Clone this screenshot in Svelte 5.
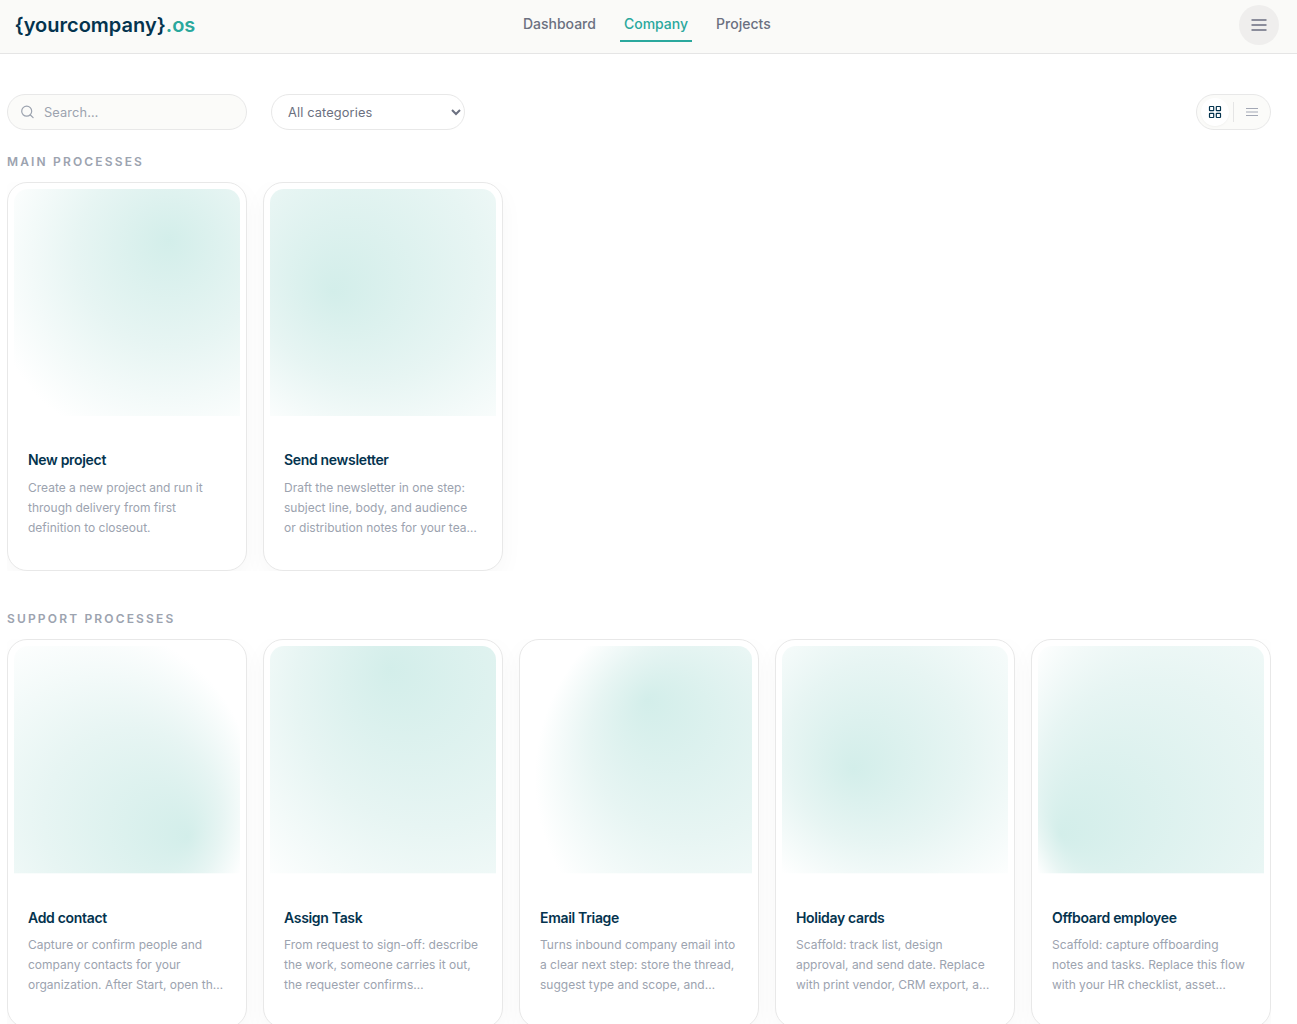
<script>
  const nav = ['Dashboard', 'Company', 'Projects'];
  const sections = [
    {
      title: 'Main processes',
      cards: [
        { title: 'New project', lines: ['Create a new project and run it', 'through delivery from first', 'definition to closeout.'], g: [0.69, 0.34, 0.82, 0.685, 0.225] },
        { title: 'Send newsletter', lines: ['Draft the newsletter in one step:', 'subject line, body, and audience', 'or distribution notes for your tea…'], g: [0.57, 0.25, 1.0, 0.28, 0.45] }
      ]
    },
    {
      title: 'Support processes',
      cards: [
        { title: 'Add contact', lines: ['Capture or confirm people and', 'company contacts for your', 'organization. After Start, open th…'], g: [0.28, 0.68, 0.79, 0.77, 0.84] },
        { title: 'Assign Task', lines: ['From request to sign-off: describe', 'the work, someone carries it out,', 'the requester confirms…'], g: [0.9, 0.29, 1.2, 0.53, 0.1] },
        { title: 'Email Triage', lines: ['Turns inbound company email into', 'a clear next step: store the thread,', 'suggest type and scope, and…'], g: [0.9, 0.58, 0.86, 0.535, 0.235] },
        { title: 'Holiday cards', lines: ['Scaffold: track list, design', 'approval, and send date. Replace', 'with print vendor, CRM export, a…'], g: [0.53, 0.4, 0.8, 0.315, 0.54] },
        { title: 'Offboard employee', lines: ['Scaffold: capture offboarding', 'notes and tasks. Replace this flow', 'with your HR checklist, asset…'], g: [0.9, 0.5, 1.03, 0.1, 0.83] }
      ]
    }
  ];
</script>

<div class="page">
  <header>
    <div class="logo">{'{yourcompany}'}<span>.os</span></div>
    <nav>
      {#each nav as item}
        <a href="#top" class:active={item === 'Company'}>{item}</a>
      {/each}
    </nav>
    <button class="menu" aria-label="Menu">
      <svg width="20" height="20" viewBox="0 0 20 20" fill="none" stroke="currentColor" stroke-width="2"><path d="M2.5 5h15M2.5 10h15M2.5 15h15" /></svg>
    </button>
  </header>

  <main>
    <div class="toolbar">
      <label class="search">
        <svg width="14" height="14" viewBox="0 0 14 14" fill="none" stroke="currentColor" stroke-width="1.2" stroke-linecap="round"><circle cx="5.7" cy="6.2" r="5" /><path d="M9.4 10l2.7 2.6" /></svg>
        <input type="text" placeholder="Search…" />
      </label>
      <select aria-label="Category"><option>All categories</option></select>
      <div class="views">
        <button class="on" aria-label="Grid view">
          <svg width="14" height="14" viewBox="0 0 14 14" fill="none" stroke="currentColor" stroke-width="1.2"><rect x="1.5" y="1.5" width="4.2" height="4.2" rx=".5" /><rect x="8.3" y="1.5" width="4.2" height="4.2" rx=".5" /><rect x="1.5" y="8.3" width="4.2" height="4.2" rx=".5" /><rect x="8.3" y="8.3" width="4.2" height="4.2" rx=".5" /></svg>
        </button>
        <i></i>
        <button aria-label="List view">
          <svg width="14" height="14" viewBox="0 0 14 14" fill="none" stroke="currentColor" stroke-width="1"><path d="M1 3.5h12M1 10.5h12" /><path d="M1 7h12" /></svg>
        </button>
      </div>
    </div>

    {#each sections as section, s}
      <section>
        <h2>{section.title}</h2>
        <div class="row">
          {#each section.cards as card, c}
            <article>
              <div class="art">
                <svg viewBox="0 0 100 100" preserveAspectRatio="none">
                  <defs>
                    <radialGradient id="glow-{s}-{c}" cx={card.g[0]} cy={card.g[1]} r={card.g[2]} fx={card.g[3]} fy={card.g[4]}>
                      <stop offset="0" stop-color="#d3eeea" />
                      <stop offset="0.5" stop-color="#e7f5f3" />
                      <stop offset="1" stop-color="#ffffff" />
                    </radialGradient>
                  </defs>
                  <rect width="100" height="100" fill="url(#glow-{s}-{c})" />
                </svg>
              </div>
              <div class="body">
                <h3>{card.title}</h3>
                <p>{#each card.lines as line}<span>{line}</span>{/each}</p>
              </div>
            </article>
          {/each}
        </div>
      </section>
    {/each}
  </main>
</div>

<style>
  :global(body) {
    background: #fff;
    font-family: Inter, 'Liberation Sans', sans-serif;
  }
  * {
    box-sizing: border-box;
  }
  .page {
    height: 1024px;
    overflow: hidden;
  }
  header {
    height: 54px;
    display: grid;
    grid-template-columns: 1fr auto 1fr;
    align-items: start;
    padding: 5px 18px 0 14.6px;
    background: #fafaf8;
    border-bottom: 1px solid #e5e5e5;
  }
  .logo {
    font-size: 20px;
    line-height: 40px;
    font-weight: 600;
    color: #04334e;
  }
  .logo span {
    color: #2aa89d;
  }
  nav {
    display: flex;
    gap: 20px;
    padding-top: 1px;
  }
  nav a {
    height: 36px;
    padding: 0 4px;
    line-height: 36px;
    font-size: 14px;
    font-weight: 500;
    color: #6b7080;
    text-decoration: none;
    border-bottom: 2px solid transparent;
  }
  nav a.active {
    color: #2aa89d;
    border-color: #2aa89d;
  }
  button {
    display: grid;
    place-items: center;
    padding: 0;
    border: 0;
    border-radius: 50%;
    background: none;
  }
  .menu {
    justify-self: end;
    width: 40px;
    height: 40px;
    background: #efeeed;
    color: #8b8d9b;
  }
  main {
    padding: 40px 26px 0 7px;
  }
  .toolbar {
    display: flex;
    gap: 24px;
    height: 36px;
  }
  .search {
    display: flex;
    align-items: center;
    gap: 9px;
    width: 240px;
    padding: 0 13px;
    border: 1px solid #e8e8e8;
    border-radius: 18px;
    background: #fbfbf9;
    color: #9ca3af;
  }
  .search input {
    width: 170px;
    padding: 0;
    border: 0;
    background: none;
    font: 400 12.8px Inter, sans-serif;
    letter-spacing: 0.128px;
  }
  .search input::placeholder {
    color: #9ca3af;
  }
  select {
    width: 194px;
    padding: 0 0 0 12px;
    border: 1px solid #e8e8e8;
    border-radius: 18px;
    background: #fff;
    color: #6b7080;
    font: 400 12.8px Inter, sans-serif;
    letter-spacing: 0.128px;
  }
  .views {
    display: flex;
    align-items: center;
    gap: 4px;
    width: 75px;
    margin-left: auto;
    padding: 0 4px;
    border: 1px solid #e8e8e8;
    border-radius: 18px;
    background: #fbfbf9;
  }
  .views button {
    width: 28px;
    height: 28px;
    color: #a3a8b5;
  }
  .views button.on {
    background: #fff;
    color: #04334e;
    box-shadow: 0 1px 2px rgba(0, 0, 0, 0.04);
  }
  .views i {
    width: 1px;
    height: 20px;
    background: #e5e5e5;
  }
  section {
    padding-top: 24px;
    margin-bottom: 16.4px;
  }
  h2 {
    margin: 0 0 12px;
    font-size: 12px;
    line-height: 16px;
    font-weight: 600;
    letter-spacing: 2.16px;
    text-transform: uppercase;
    color: #9ca3af;
  }
  .row {
    display: grid;
    grid-template-columns: repeat(5, 240px);
    gap: 16px;
    overflow: hidden;
  }
  article {
    height: 389px;
    padding: 6px;
    border: 1px solid #e8e8e8;
    border-radius: 20px;
    background: #fff;
    box-shadow: 0 8px 24px rgba(0, 0, 0, 0.035);
  }
  .art {
    height: 227.3px;
    border-radius: 14px 14px 0 0;
    overflow: hidden;
  }
  .art svg {
    display: block;
    width: 100%;
    height: 100%;
  }
  .body {
    padding: 34px 14px 0;
  }
  h3 {
    margin: 0 0 7.7px;
    font-size: 14px;
    line-height: 20px;
    font-weight: 600;
    letter-spacing: -0.32px;
    color: #04334e;
  }
  p {
    margin: 0;
    font-size: 12px;
    line-height: 20px;
    color: #9ca3af;
  }
  p span {
    display: block;
    white-space: nowrap;
  }
</style>
